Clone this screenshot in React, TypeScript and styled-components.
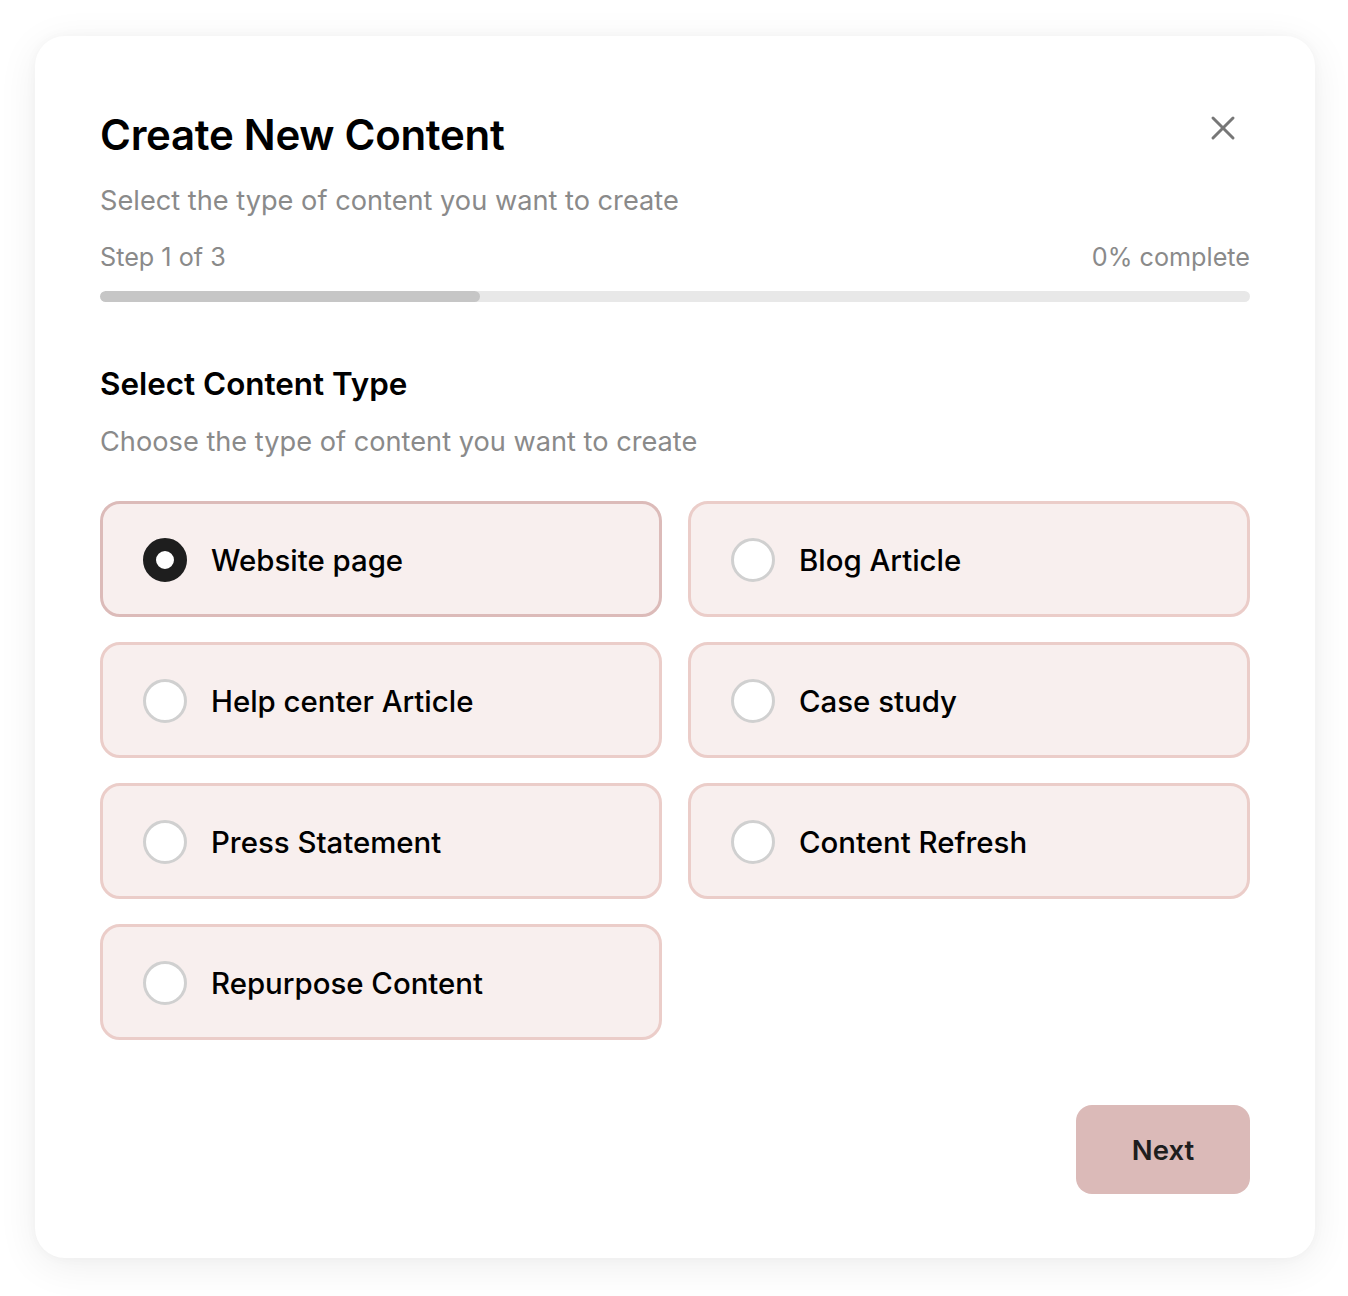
import React, { useState } from "react";
import styled, { createGlobalStyle } from "styled-components";
import { X } from "lucide-react";

const Global = createGlobalStyle`
  html, body { margin: 0; padding: 0; background: #ffffff; }
  body { font-family: Inter, "Noto Sans", "Liberation Sans", sans-serif; -webkit-font-smoothing: antialiased; }
  * { box-sizing: border-box; }
`;

const Page = styled.div`
  padding: 36px 33px 38px 35px;
  background: #ffffff;
`;

const Card = styled.div`
  width: 1280px;
  background: #ffffff;
  border-radius: 30px;
  box-shadow: 0 8px 40px rgba(0, 0, 0, 0.07), 0 0 12px rgba(0, 0, 0, 0.03);
  padding: 74px 65px 64px 65px;
  display: flex;
  flex-direction: column;
`;

const Header = styled.div`
  display: flex;
  align-items: flex-start;
  justify-content: space-between;
`;

const Title = styled.h1`
  margin: 0;
  font-size: 42px;
  line-height: 50px;
  font-weight: 600;
  color: #000;
  letter-spacing: -0.3px;
`;

const CloseButton = styled.button`
  border: none;
  background: transparent;
  padding: 0;
  margin: -2px 7px 0 0;
  width: 40px;
  height: 40px;
  display: flex;
  align-items: center;
  justify-content: center;
  color: #777;
  cursor: pointer;
`;

const Subtitle = styled.p`
  margin: 25px 0 0;
  font-size: 27.2px;
  line-height: 32px;
  color: #8a8a8a;
`;

const StepRow = styled.div`
  display: flex;
  justify-content: space-between;
  margin-top: 25px;
  font-size: 25.2px;
  line-height: 30px;
  color: #8a8a8a;
`;

const Track = styled.div`
  margin-top: 19px;
  height: 11px;
  border-radius: 6px;
  background: #e8e8e8;
  overflow: hidden;
`;

const Fill = styled.div`
  height: 100%;
  border-radius: 6px;
  background: #c6c6c6;
`;

const SectionTitle = styled.h2`
  margin: 63px 0 0;
  font-size: 31.4px;
  line-height: 38px;
  font-weight: 600;
  color: #000;
`;

const SectionDesc = styled.p`
  margin: 23px 0 0;
  font-size: 27.2px;
  line-height: 32px;
  color: #8a8a8a;
`;

const Grid = styled.div`
  margin-top: 43px;
  display: grid;
  grid-template-columns: 1fr 1fr;
  gap: 25px 26px;
`;

const Option = styled.button<{ $selected: boolean }>`
  height: 116px;
  border: 3px solid ${(p) => (p.$selected ? "#dcbbb9" : "#ebcdc9")};
  background: #f8efee;
  border-radius: 20px;
  display: flex;
  align-items: center;
  gap: 24px;
  padding: 2px 0 0 40px;
  font-family: inherit;
  cursor: pointer;
  text-align: left;
`;

const Radio = styled.span<{ $selected: boolean }>`
  width: 44px;
  height: 44px;
  border-radius: 50%;
  flex: none;
  background: #ffffff;
  border: ${(p) => (p.$selected ? "13px solid #1e1e1e" : "3px solid #d0d0d0")};
`;

const Label = styled.span`
  font-size: 29.4px;
  font-weight: 500;
  color: #000;
`;

const Footer = styled.div`
  margin-top: 65px;
  display: flex;
  justify-content: flex-end;
`;

const NextButton = styled.button`
  width: 174px;
  height: 89px;
  border: none;
  border-radius: 16px;
  background: #dbbab8;
  color: #1e1e1e;
  font-family: inherit;
  font-size: 27.5px;
  font-weight: 600;
  cursor: pointer;
`;

const options = [
  "Website page",
  "Blog Article",
  "Help center Article",
  "Case study",
  "Press Statement",
  "Content Refresh",
  "Repurpose Content",
];

export default function App() {
  const [selected, setSelected] = useState(0);
  const progress = 33;
  return (
    <>
      <Global />
      <Page>
        <Card>
          <Header>
            <Title>Create New Content</Title>
            <CloseButton aria-label="Close">
              <X size={40} strokeWidth={1.8} />
            </CloseButton>
          </Header>
          <Subtitle>Select the type of content you want to create</Subtitle>
          <StepRow>
            <span>Step 1 of 3</span>
            <span>0% complete</span>
          </StepRow>
          <Track>
            <Fill style={{ width: `${progress}%` }} />
          </Track>
          <SectionTitle>Select Content Type</SectionTitle>
          <SectionDesc>Choose the type of content you want to create</SectionDesc>
          <Grid>
            {options.map((o, i) => (
              <Option key={o} $selected={selected === i} onClick={() => setSelected(i)}>
                <Radio $selected={selected === i} />
                <Label>{o}</Label>
              </Option>
            ))}
          </Grid>
          <Footer>
            <NextButton>Next</NextButton>
          </Footer>
        </Card>
      </Page>
    </>
  );
}
